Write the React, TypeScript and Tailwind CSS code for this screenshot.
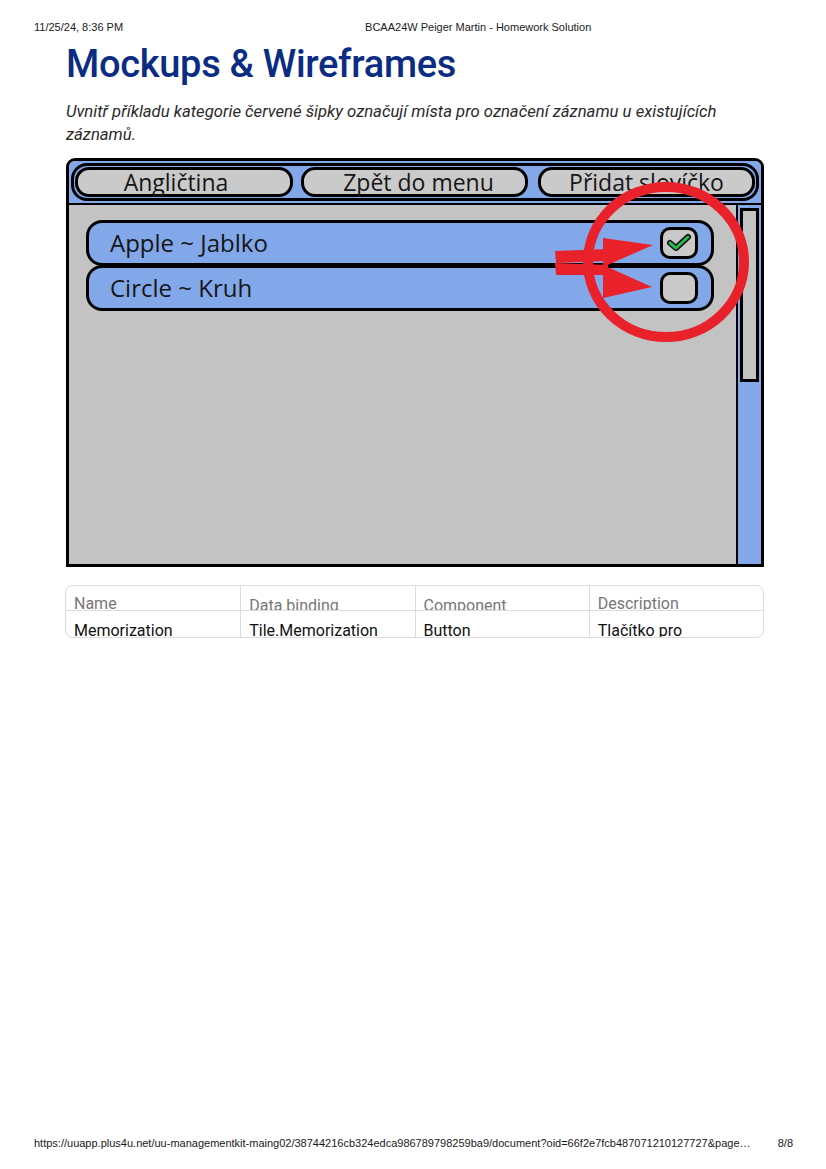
import React from "react";

const blue = "bg-[#82a8ea]";

interface Row {
  label: string;
  checked: boolean;
}

const rows: Row[] = [
  { label: "Apple ~ Jablko", checked: true },
  { label: "Circle ~ Kruh", checked: false },
];

const columns = [
  { head: "Name", value: "Memorization", shift: "pt-[8px]" },
  { head: "Data binding", value: "Tile.Memorization", shift: "pt-[10px]" },
  { head: "Component", value: "Button", shift: "pt-[10px]" },
  { head: "Description", value: "Tlačítko pro", shift: "pt-[8px]" },
];

// wireframe picture drawn with divs, annotations on top
const Mockup: React.FC = () => {
  return (
    <div className="relative w-[698px] h-[409px]">
      <div className="w-full h-full flex flex-col border-[3px] border-black rounded-t-[9px] bg-[#c3c3c3] overflow-hidden font-['Open_Sans',sans-serif] text-[#161616]">
        {/* top bar */}
        <div className={`${blue} p-[2px] border-b-[2px] border-black`}>
          <div className={`${blue} border-[3px] border-black rounded-[16px] py-[1px] pl-[1px] pr-[1px] flex gap-[8px]`}>
            <div className="w-[218px] h-[30px] rounded-[14px] border-[3px] border-black bg-[#cacaca] flex items-center justify-center pr-[16px] text-[23px] leading-none">
              Angličtina
            </div>
            <div className="w-[227px] h-[30px] rounded-[14px] border-[3px] border-black bg-[#cacaca] flex items-center justify-center pl-[8px] text-[23px] leading-none">
              Zpět do menu
            </div>
            <div className="flex-1 ml-[2px] h-[30px] rounded-[14px] border-[3px] border-black bg-[#cacaca] flex items-center justify-center text-[23px] leading-none">
              Přidat slovíčko
            </div>
          </div>
        </div>

        {/* content */}
        <div className="flex flex-1">
          <div className="flex-1 pl-[17px] pt-[15px] pr-[22px]">
            {rows.map((row, i) => (
              <div
                key={i}
                className={`${blue} h-[46px] border-[3px] border-black rounded-[16px] flex items-center justify-between pl-[21px] pr-[13px] ${i > 0 ? "-mt-[1px]" : ""}`}
              >
                <span className="text-[24px] leading-none">{row.label}</span>
                <div className="w-[38px] h-[32px] rounded-[10px] border-[3px] border-black bg-[#c9c9c9] flex items-center justify-center">
                  {row.checked && (
                    <svg width="26" height="20" viewBox="0 0 26 20">
                      <path d="M4 10 L10 15 L22 4" fill="none" stroke="#111" strokeWidth="6" strokeLinecap="round" strokeLinejoin="round" />
                      <path d="M4 10 L10 15 L22 4" fill="none" stroke="#2fb44e" strokeWidth="3" strokeLinecap="round" strokeLinejoin="round" />
                    </svg>
                  )}
                </div>
              </div>
            ))}
          </div>
          {/* scrollbar */}
          <div className={`${blue} w-[25px] border-l-[2px] border-black pt-[3px] px-[2px]`}>
            <div className="h-[174px] border-[3px] border-black bg-[#c3c3c3]" />
          </div>
        </div>
      </div>

      {/* red annotation */}
      <svg className="absolute left-0 top-0" width="698" height="409" viewBox="0 0 698 409">
        <polygon points="489,93 542,91 542,103 490,105" fill="#e8212b" />
        <polygon points="537,80 587,87 537,109" fill="#e8212b" />
        <polygon points="489,105 542,107 542,117 490,117" fill="#e8212b" />
        <polygon points="537,107 586,129 537,140" fill="#e8212b" />
        <ellipse cx="600" cy="104" rx="78" ry="75" fill="none" stroke="#e8212b" strokeWidth="10" />
      </svg>
    </div>
  );
};

const App: React.FC = () => {
  return (
    <div className="w-[826px] h-[1169px] bg-white flex flex-col font-['Roboto',sans-serif]">
      {/* print header */}
      <div className="pt-[21px] px-[34px] flex text-[11px] leading-[12px] text-[#1a1a1a] font-['Liberation_Sans',sans-serif]">
        <span>11/25/24, 8:36 PM</span>
        <span className="ml-[242px]">BCAA24W Peiger Martin - Homework Solution</span>
      </div>

      <div className="px-[66px]">
        <h1 className="mt-[9px] text-[38px] leading-[44px] font-medium text-[#0b2c83] tracking-[-0.3px]">
          Mockups &amp; Wireframes
        </h1>
        <p className="mt-[14px] text-[16.7px] leading-[23px] italic text-[#2a2a2a]">
          Uvnitř příkladu kategorie červené šipky označují místa pro označení záznamu u existujících záznamů.
        </p>

        <div className="mt-[12px]">
          <Mockup />
        </div>

        {/* table */}
        <div className="mt-[18px] w-[699px] -ml-[1px] border border-[#dcdcdc] rounded-[8px] overflow-hidden">
          <div className="grid grid-cols-4 h-[25px] border-b border-[#dcdcdc]">
            {columns.map((c, i) => (
              <div key={i} className={`px-[8px] overflow-hidden text-[16px] leading-[20px] text-[#767676] ${c.shift} ${i > 0 ? "border-l border-[#dcdcdc]" : ""}`}>
                {c.head}
              </div>
            ))}
          </div>
          <div className="grid grid-cols-4 h-[26px]">
            {columns.map((c, i) => (
              <div key={i} className={`px-[8px] pt-[10px] overflow-hidden text-[16px] leading-[20px] text-[#111] ${i > 0 ? "border-l border-[#dcdcdc]" : ""}`}>
                {c.value}
              </div>
            ))}
          </div>
        </div>
      </div>

      {/* print footer */}
      <div className="mt-auto pb-[20px] pl-[34px] pr-[33px] flex justify-between text-[11px] leading-[12px] text-[#1a1a1a] font-['Liberation_Sans',sans-serif]">
        <span>https://uuapp.plus4u.net/uu-managementkit-maing02/38744216cb324edca986789798259ba9/document?oid=66f2e7fcb487071210127727&amp;page…</span>
        <span>8/8</span>
      </div>
    </div>
  );
};

export default App;
